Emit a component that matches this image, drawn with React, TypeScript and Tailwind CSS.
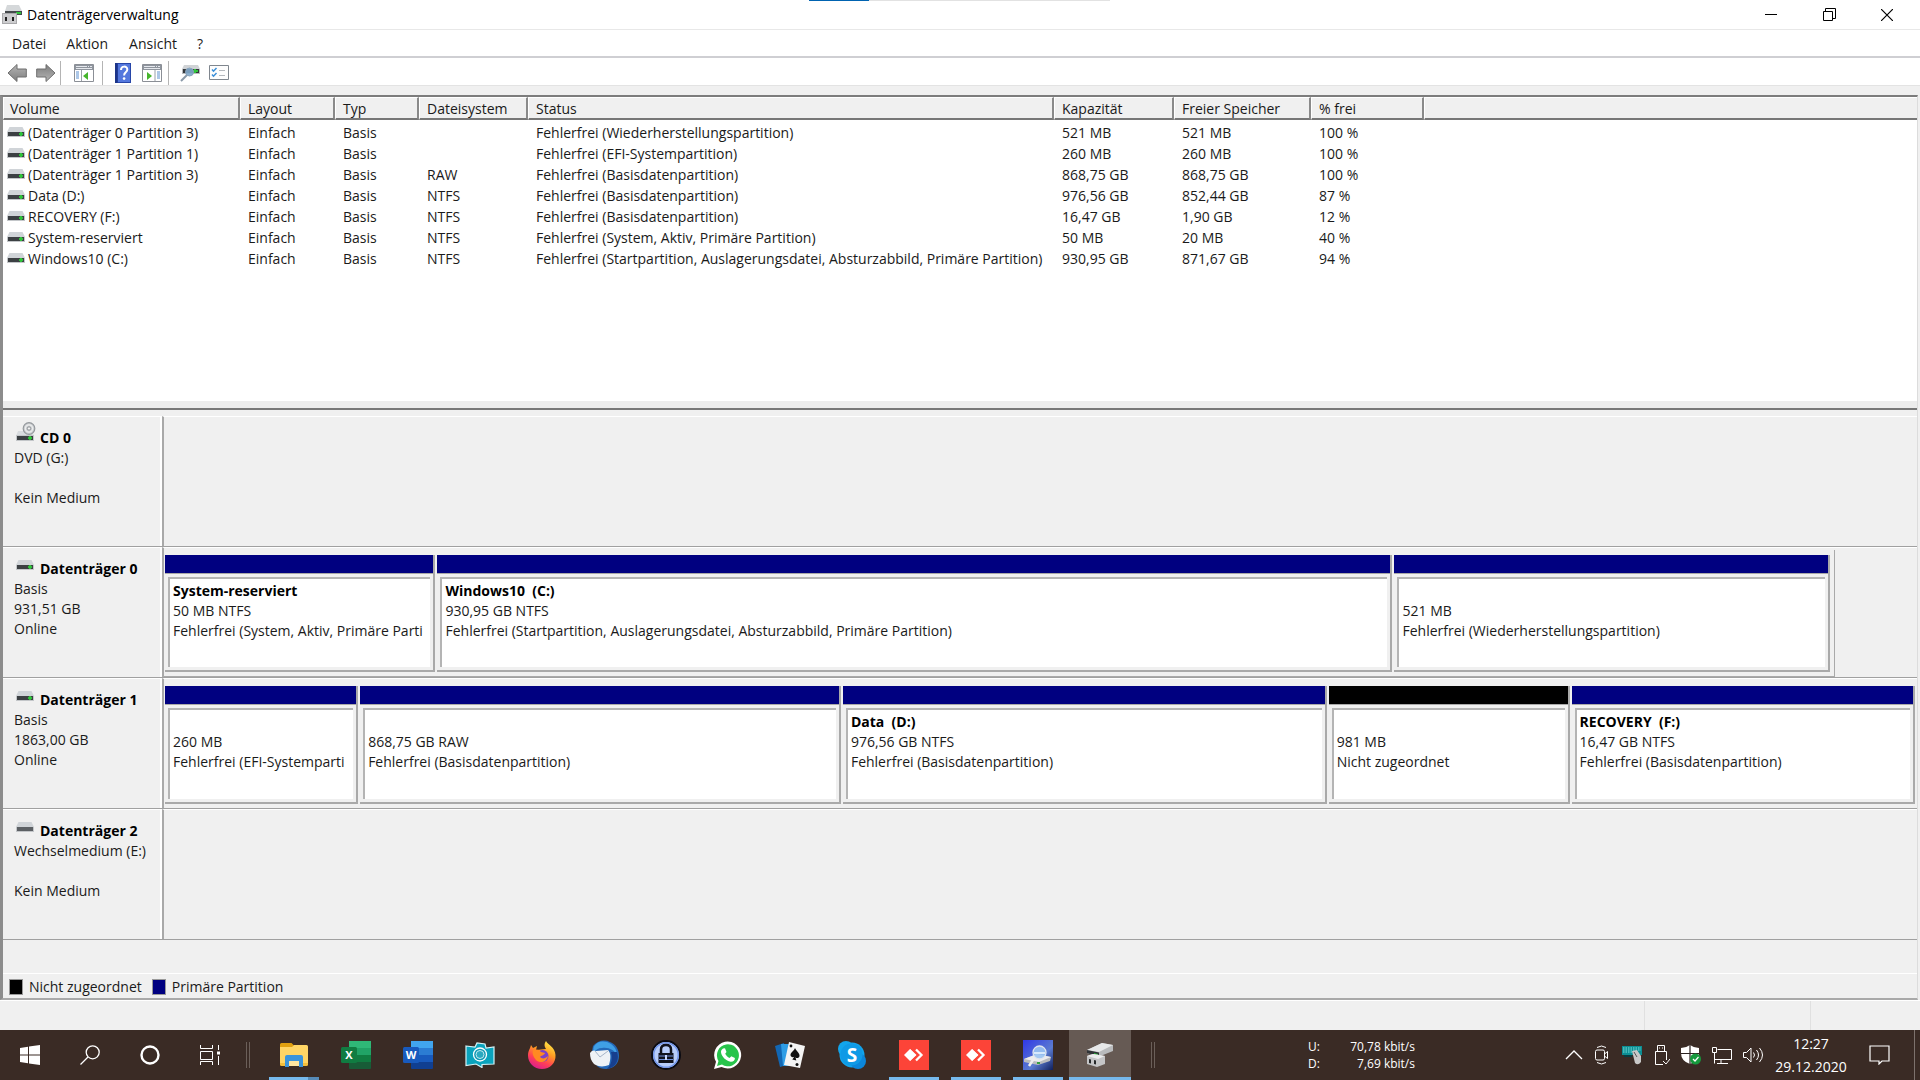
import type { ReactNode } from "react";

interface Volume {
  name: string;
  fs: string;
  status: string;
  capacity: string;
  free: string;
  percent: string;
}

interface Partition {
  name?: string;
  size: string;
  status: string;
  share: number;
  unallocated?: boolean;
}

interface Disk {
  name: string;
  lines: string[];
  kind: "cd" | "online" | "offline";
  fill?: number;
  partitions: Partition[];
}

const volumes: Volume[] = [
  { name: "(Datenträger 0 Partition 3)", fs: "", status: "Fehlerfrei (Wiederherstellungspartition)", capacity: "521 MB", free: "521 MB", percent: "100 %" },
  { name: "(Datenträger 1 Partition 1)", fs: "", status: "Fehlerfrei (EFI-Systempartition)", capacity: "260 MB", free: "260 MB", percent: "100 %" },
  { name: "(Datenträger 1 Partition 3)", fs: "RAW", status: "Fehlerfrei (Basisdatenpartition)", capacity: "868,75 GB", free: "868,75 GB", percent: "100 %" },
  { name: "Data (D:)", fs: "NTFS", status: "Fehlerfrei (Basisdatenpartition)", capacity: "976,56 GB", free: "852,44 GB", percent: "87 %" },
  { name: "RECOVERY (F:)", fs: "NTFS", status: "Fehlerfrei (Basisdatenpartition)", capacity: "16,47 GB", free: "1,90 GB", percent: "12 %" },
  { name: "System-reserviert", fs: "NTFS", status: "Fehlerfrei (System, Aktiv, Primäre Partition)", capacity: "50 MB", free: "20 MB", percent: "40 %" },
  { name: "Windows10 (C:)", fs: "NTFS", status: "Fehlerfrei (Startpartition, Auslagerungsdatei, Absturzabbild, Primäre Partition)", capacity: "930,95 GB", free: "871,67 GB", percent: "94 %" },
];

const disks: Disk[] = [
  { name: "CD 0", lines: ["DVD (G:)", "", "Kein Medium"], kind: "cd", partitions: [] },
  {
    name: "Datenträger 0",
    lines: ["Basis", "931,51 GB", "Online"],
    kind: "online",
    fill: 95.3,
    partitions: [
      { name: "System-reserviert", size: "50 MB NTFS", status: "Fehlerfrei (System, Aktiv, Primäre Parti", share: 269 },
      { name: "Windows10  (C:)", size: "930,95 GB NTFS", status: "Fehlerfrei (Startpartition, Auslagerungsdatei, Absturzabbild, Primäre Partition)", share: 955 },
      { size: "521 MB", status: "Fehlerfrei (Wiederherstellungspartition)", share: 434 },
    ],
  },
  {
    name: "Datenträger 1",
    lines: ["Basis", "1863,00 GB", "Online"],
    kind: "online",
    fill: 100,
    partitions: [
      { size: "260 MB", status: "Fehlerfrei (EFI-Systemparti", share: 192 },
      { size: "868,75 GB RAW", status: "Fehlerfrei (Basisdatenpartition)", share: 481 },
      { name: "Data  (D:)", size: "976,56 GB NTFS", status: "Fehlerfrei (Basisdatenpartition)", share: 484 },
      { size: "981 MB", status: "Nicht zugeordnet", share: 240, unallocated: true },
      { name: "RECOVERY  (F:)", size: "16,47 GB NTFS", status: "Fehlerfrei (Basisdatenpartition)", share: 343 },
    ],
  },
  { name: "Datenträger 2", lines: ["Wechselmedium (E:)", "", "Kein Medium"], kind: "offline", partitions: [] },
];

const columns = ["Volume", "Layout", "Typ", "Dateisystem", "Status", "Kapazität", "Freier Speicher", "% frei", ""];

/* ---------- Drive icons ---------- */

function DriveIcon({ led = true }: { led?: boolean }) {
  return (
    <svg width="18" height="11" viewBox="0 0 18 11" className="shrink-0">
      <path d="M2.5 0h13L18 5H0z" fill="#d0d4d8" />
      <path d="M0 5h18v5H0z" fill="#c3c6c9" />
      <path d="M1 5h16v4H1z" fill={led ? "#3c4043" : "#5c6064"} />
      {led && <path d="M12 6h4v2h-4zM13 5h2v4h-2z" fill="#2fc23a" />}
    </svg>
  );
}

function CdDriveIcon() {
  return (
    <svg width="20" height="20" viewBox="0 0 20 20" className="shrink-0">
      <path d="M2 9h14l2 5H0z" fill="#d9dcdf" />
      <circle cx="13" cy="6.5" r="5.8" fill="#cdd0d3" stroke="#95999d" strokeWidth="1.2" />
      <circle cx="13" cy="6.5" r="3.6" fill="none" stroke="#eceded" strokeWidth="1.2" />
      <circle cx="13" cy="6.5" r="1.7" fill="#f4f4f4" stroke="#8d9195" />
      <path d="M0 13h18v6H0z" fill="#c3c6c9" />
      <path d="M1 14h16v4H1z" fill="#3c4043" />
      <path d="M12 15h4v2h-4zM13 14h2v4h-2z" fill="#2fc23a" />
    </svg>
  );
}

function AppIcon() {
  return (
    <svg width="20" height="20" viewBox="0 0 20 20" className="shrink-0">
      <path d="M5 0h12l3 6H3z" fill="#d5d8da" />
      <path d="M3 6h17v4H3z" fill="#45494c" />
      <path d="M14 7h5v2h-5z" fill="#2fc23a" />
      <path d="M0 8h15v11H0z" fill="#a9a9ab" />
      <path d="M1 9h13v9H1z" fill="#cdcdcf" />
      <path d="M3 12h2v4H3zM10 12h2v4h-2z" fill="#222" />
    </svg>
  );
}

/* ---------- Toolbar icons ---------- */

function ArrowIcon({ forward = false }: { forward?: boolean }) {
  return (
    <svg width="20" height="20" viewBox="0 0 20 20" className={forward ? "rotate-180" : ""}>
      <defs>
        <linearGradient id={forward ? "arrowF" : "arrowB"} x1="0" y1="0" x2="0" y2="1">
          <stop offset="0" stopColor="#b5b5b5" />
          <stop offset="1" stopColor="#7d7d7d" />
        </linearGradient>
      </defs>
      <path d="M1 10L10 1.5V6h9.3v8H10v4.5z" fill={forward ? "url(#arrowF)" : "url(#arrowB)"} stroke="#6e6e6e" />
    </svg>
  );
}

function PaneIcon({ right = false }: { right?: boolean }) {
  const side = right ? 14 : 1;
  return (
    <svg width="20" height="18" viewBox="0 0 20 18">
      <path d="M.5.5h19v17H.5z" fill="#fff" stroke="#8b8f96" />
      <path d="M1 1h18v5H1z" fill="#8f959e" />
      <path d="M2 2h11v1H2zM14 2h1v1h-1zM16 2h2v1h-2zM2 4h16v1H2z" fill="#e6e9ee" />
      <path d={right ? "M13 6v11" : "M7.5 6v11"} stroke="#9aa0a8" />
      <path d={`M${side + 1} 8h3M${side + 1} 10h3M${side + 1} 12h3M${side + 1} 14h3`} stroke="#5b8fd0" />
      <path d={right ? "M5 8l5 4-5 4z" : "M14 8l-5 4 5 4z"} fill="#46b52c" />
    </svg>
  );
}

function HelpIcon() {
  return (
    <svg width="16" height="20" viewBox="0 0 16 20">
      <path d="M0 0h16v20H0z" fill="#2746a8" />
      <path d="M3 1h12v18H3z" fill="#5377dd" />
      <path d="M0 0h2.5v20H0z" fill="#1c3488" />
      <path d="M6 7c0-4.6 6.3-4.2 6.3-.6 0 3-3.2 2.8-3.2 6" fill="none" stroke="#fff" strokeWidth="2" />
      <circle cx="9.1" cy="15.6" r="1.3" fill="#fff" />
    </svg>
  );
}

function InspectIcon() {
  return (
    <svg width="20" height="18" viewBox="0 0 20 18">
      <path d="M4 1h14l2 4H2z" fill="#d0d3d6" />
      <path d="M2 5h18v5H2z" fill="#b9bcbf" />
      <path d="M3 5h16v4H3z" fill="#34383b" />
      <path d="M13 6h5v2h-5zM14 5h2v4h-2z" fill="#32c43c" />
      <path d="M7 11l-6 6" stroke="#8a99a8" strokeWidth="2" />
      <circle cx="9.5" cy="8" r="4" fill="#7fa8cc" fillOpacity=".9" stroke="#8aa3ba" />
    </svg>
  );
}

function ChecklistIcon() {
  return (
    <svg width="20" height="15" viewBox="0 0 20 15">
      <path d="M.5.5h19v14H.5z" fill="#fdfdfd" stroke="#7f868e" />
      <path d="M3 4.5l1.5 1.7L7.5 3M3 9.5l1.5 1.7L7.5 8" fill="none" stroke="#3b8fd8" strokeWidth="1.5" />
      <path d="M10 5.5h6M10 10.5h6" stroke="#b4b8bd" />
    </svg>
  );
}

/* ---------- Taskbar icons ---------- */

function StartIcon() {
  return (
    <svg width="20" height="20" viewBox="0 0 20 20" fill="#fff">
      <path d="M0 3l8-1.2v7.7H0zM9 1.6L20 0v9.5H9zM0 10.5h8v7.7L0 17zM9 10.5h11V20L9 18.4z" />
    </svg>
  );
}

function SearchIcon() {
  return (
    <svg width="20" height="20" viewBox="0 0 20 20" fill="none" stroke="#fff" strokeWidth="1.3">
      <circle cx="12.7" cy="7.3" r="6.5" />
      <path d="M8 12L.5 19.5" />
    </svg>
  );
}

function CortanaIcon() {
  return (
    <svg width="20" height="20" viewBox="0 0 20 20">
      <circle cx="10" cy="10" r="8.5" fill="none" stroke="#fff" strokeWidth="2.4" />
    </svg>
  );
}

function TaskViewIcon() {
  return (
    <svg width="20" height="20" viewBox="0 0 20 20" fill="none" stroke="#fff">
      <path d="M.5 0v3.5h12V0M.5 6.5h12v8H.5zM.5 20v-3.5h12V20M18.5 0v5M18.5 11v9" />
      <path d="M17 6.5h3v3h-3z" fill="#fff" stroke="none" />
    </svg>
  );
}

function ExplorerIcon() {
  return (
    <svg width="28" height="24" viewBox="0 0 28 24">
      <path d="M0 1.5Q0 0 1.5 0h10L14 2.5 12 5H0z" fill="#e0a010" />
      <path d="M0 4h12l2-2h12.5Q28 2 28 3.5V22H0z" fill="#ffd565" />
      <path d="M0 20h28v1.5Q28 23 26.5 23h-25Q0 23 0 21.5z" fill="#f4bf3c" />
      <path d="M5 24V14q0-2 2-2h14q2 0 2 2v10h-4v-6H9v6z" fill="#3a94dc" />
      <path d="M9 18h10v5H9z" fill="#ffe6a0" />
    </svg>
  );
}

function OfficeIcon({ letter, colors }: { letter: string; colors: string[] }) {
  return (
    <svg width="30" height="28" viewBox="0 0 30 28">
      <path d="M8 0h22v7H8z" fill={colors[0]} />
      <path d="M8 7h22v7H8z" fill={colors[1]} />
      <path d="M8 14h22v7H8z" fill={colors[2]} />
      <path d="M8 21h22v6q0 1-1 1H9q-1 0-1-1z" fill={colors[3]} />
      <rect y="6" width="16" height="16" rx="1.5" fill={colors[4]} />
      <text x="8" y="18" textAnchor="middle" fontSize="11" fontWeight="700" fill="#fff">
        {letter}
      </text>
    </svg>
  );
}

function CameraIcon() {
  return (
    <svg width="30" height="26" viewBox="0 0 30 26">
      <path d="M1 4l9 1 2-4 8 1 1 4 8-1v17l-12 .5v3L11 22 1 23.500z" fill="#0aa3bd" stroke="#d5f4f8" strokeWidth="1.2" />
      <circle cx="15" cy="12.5" r="6.5" fill="#1199b4" stroke="#fff" strokeWidth="1.3" />
      <circle cx="15" cy="12.5" r="4" fill="#2aa9c0" stroke="#bfeaf0" />
    </svg>
  );
}

function FirefoxIcon() {
  return (
    <svg width="30" height="30" viewBox="0 0 30 30">
      <defs>
        <linearGradient id="fox" x1=".8" y1="0" x2=".3" y2="1">
          <stop offset="0" stopColor="#fff04a" />
          <stop offset=".4" stopColor="#ff9a22" />
          <stop offset=".7" stopColor="#ff4055" />
          <stop offset="1" stopColor="#d81d90" />
        </linearGradient>
      </defs>
      <path d="M19 1c2 4 9 6 9.500 14C29 23 23 29 15 29S1 23 1 15.500C1 11 3 9 4 5l2 3 4-2-1 4 10-1c-2-3-2-5 0-8z" fill="url(#fox)" />
      <circle cx="15.5" cy="16" r="6" fill="#7c40c9" />
      <path d="M6 10c3-1 6-1 8 2l4 1c-1 3-4 2-5 4 2 2 5 2 8-1-1 6-8 8-12 4-3-3-4-7-3-10z" fill="#ff8a22" />
    </svg>
  );
}

function ThunderbirdIcon() {
  return (
    <svg width="30" height="30" viewBox="0 0 30 30">
      <path d="M4 6C8 1 15-1 21 2c6 2 9 8 9 14 0 8-6 13-13 13-4 0-7-1-9-3L3 11z" fill="#2468b8" />
      <path d="M6 5c3-4 8-4 12-3 6 2 10 7 10 13-3-5-8-8-15-7-4 0-6 2-8 4-1-2-1-5 1-7z" fill="#3f9fe5" />
      <path d="M1 13c2-3 4-3 6-2l12-1c3 3 3 8 1 15-5 2-11 2-15-1-3-3-4-7-4-11z" fill="#eef2f6" />
      <path d="M6 11l5 6 8-6" fill="none" stroke="#a6b5c8" />
      <path d="M28 12c3 8-2 16-10 17 4-4 6-10 4-17z" fill="#173f8e" />
    </svg>
  );
}

function KeePassIcon() {
  return (
    <svg width="30" height="30" viewBox="0 0 30 30">
      <circle cx="15" cy="15" r="14" fill="#b7cdfb" stroke="#0b0b12" strokeWidth="2" />
      <circle cx="15" cy="15" r="12.3" fill="none" stroke="#7396ea" strokeWidth="1.5" />
      <path d="M10 14V9.500q0-4.500 5-4.500t5 4.500V14" fill="none" stroke="#10121c" strokeWidth="2.5" />
      <path d="M7.500 13h15v10h-15z" fill="#10121c" />
      <path d="M8 16h14M8 19.500h14" stroke="#6f8edb" />
      <path d="M14 15h2v5h-2z" fill="#c9d9ff" />
    </svg>
  );
}

function WhatsAppIcon() {
  return (
    <svg width="28" height="28" viewBox="0 0 28 28">
      <path d="M0 28l2-7.200A13.500 13.500 0 1 1 7.500 26z" fill="#fff" />
      <path d="M3 25l1.500-5A11 11 0 1 1 8 23.600z" fill="#27c44b" />
      <path d="M9 7.500l2-.2 1.500 3.600-1.300 1.800c1 2 2.400 3.300 4.400 4.200l1.700-1.600 3.600 1.700c.2 2.500-2 4-4.300 3.700-4.500-.6-9-5-9.600-9.400C6.800 9.600 8 8.200 9 7.500z" fill="#fff" />
    </svg>
  );
}

function CardsIcon() {
  return (
    <svg width="30" height="26" viewBox="0 0 30 26">
      <path d="M0 4l9-3 3 22-7 2z" fill="#1267b4" />
      <path d="M6 2h11v22H8z" fill="#2e9de6" />
      <path d="M14 0l16 4-5 22-16-3z" fill="#f4f4f4" />
      <path d="M20 6c1 3 5 5 4.500 8-.5 2.500-3 2.500-4 1.200l.8 3.300-4-1 2-2.800c-1.300 1-4 .3-3.800-2C15.800 10 19 9 20 6z" fill="#111" />
      <circle cx="16" cy="4" r="1.4" fill="#111" />
      <circle cx="22" cy="22.5" r="1.5" fill="#111" />
    </svg>
  );
}

function SkypeIcon() {
  return (
    <svg width="28" height="28" viewBox="0 0 28 28">
      <circle cx="14" cy="14" r="12.5" fill="#12a5ec" />
      <circle cx="8" cy="8" r="8" fill="#12a5ec" />
      <circle cx="20" cy="20" r="8" fill="#0b86da" />
      <circle cx="13.5" cy="13.5" r="11" fill="#0f9ae6" />
      <text x="14" y="21" textAnchor="middle" fontSize="19" fontWeight="700" fill="#fff">
        S
      </text>
    </svg>
  );
}

function AnyDeskIcon() {
  return (
    <svg width="30" height="30" viewBox="0 0 30 30">
      <path d="M0 0h30v30H0z" fill="#fc4438" />
      <path d="M5 15l6-6 6 6-6 6z" fill="#fff" />
      <path d="M17 9.500l5.500 5.500-5.500 5.500" fill="none" stroke="#fff" strokeWidth="2.3" />
      <path d="M11 9l6.500 6L11 21" fill="#fff" />
    </svg>
  );
}

function DefragIcon() {
  return (
    <svg width="30" height="30" viewBox="0 0 30 30">
      <defs>
        <linearGradient id="defrag" x1="0" y1="0" x2="1" y2="1">
          <stop offset="0" stopColor="#3038e8" />
          <stop offset=".6" stopColor="#5a7ad0" />
          <stop offset="1" stopColor="#10205c" />
        </linearGradient>
      </defs>
      <path d="M0 0h30v30H0z" fill="url(#defrag)" />
      <path d="M1 19l13-5 14 3-1 4-12 4-14-3z" fill="#b9bbbe" />
      <path d="M1 19l13-5 14 3-12 5z" fill="#ececee" />
      <path d="M14 22h3v2h-3z" fill="#35a043" />
      <path d="M12 17l-6 9" stroke="#eee" strokeWidth="2.5" />
      <circle cx="16.5" cy="12.5" r="6.5" fill="#9cc5f2" fillOpacity=".9" stroke="#dfe6ee" strokeWidth="1.3" />
      <path d="M11 13h11" stroke="#d8eafc" strokeWidth="2" />
    </svg>
  );
}

function DiskManagerIcon() {
  return (
    <svg width="28" height="26" viewBox="0 0 28 26">
      <path d="M1 8l15-7 11 2v6l-15 6-11-4z" fill="#b9bbbd" />
      <path d="M1 8l15-7 11 2-14 7z" fill="#e7e8e9" />
      <path d="M1 8l12 2.500V15L1 11z" fill="#303336" />
      <path d="M8 11l4 1v2l-4-1z" fill="#27b03a" />
      <path d="M1 14l6-2 12 2v8l-8 3-10-3z" fill="#c4c5c7" />
      <path d="M1 14l6-2 12 2-7 3z" fill="#ececed" />
      <path d="M3 17l2 .5v4L3 21zM8 18l2 .5v4L8 22z" fill="#26292b" />
    </svg>
  );
}

/* ---------- Tray icons ---------- */

function ChevronIcon() {
  return (
    <svg width="18" height="10" viewBox="0 0 18 10" fill="none" stroke="#fff" strokeWidth="1.3">
      <path d="M1 9l8-8 8 8" />
    </svg>
  );
}

function MeetNowIcon() {
  return (
    <svg width="16" height="20" viewBox="0 0 16 20" fill="none" stroke="#fff">
      <rect x="1.5" y="5" width="9" height="10" rx="1.5" />
      <path d="M10.500 9l3-2.500v7l-3-2.500M3 2.500q4.500-3 9 0M3 17.500q4.500 3 9 0" />
    </svg>
  );
}

function KeyboardIcon() {
  return (
    <svg width="22" height="20" viewBox="-1 0 22 20">
      <path d="M0 1h20v9H0z" fill="#0c8e93" />
      <path d="M1 3h18M1 5h18M1 7h12" stroke="#7ce0df" strokeDasharray="1.5 1" />
      <path d="M2 10h8v2H2z" fill="#063c40" />
      <path d="M10 6l5-1 4 6v6q-3 4-6 1z" fill="#c8c8c8" />
      <path d="M12 7l3 5" stroke="#555" />
    </svg>
  );
}

function UsbIcon() {
  return (
    <svg width="16" height="20" viewBox="0 0 16 20" fill="none" stroke="#fff">
      <path d="M3.500 6.500v-6h7v6M1.500 6.500h11V15M9 19.500H1.500v-13" />
      <path d="M5 3h1M8 3h1" />
      <path d="M9 16l3 3 4-5" />
    </svg>
  );
}

function DefenderIcon() {
  return (
    <svg width="20" height="20" viewBox="0 0 20 20">
      <path d="M9 0q4 3 9 3v5q0 8-9 11Q0 16 0 8V3q5 0 9-3z" fill="#fff" />
      <path d="M9 0v19M0 8.500h18" stroke="#2b2220" strokeWidth="1.2" />
      <circle cx="14.5" cy="14" r="5.5" fill="#15993d" />
      <path d="M12 14l2 2 3.500-4" fill="none" stroke="#fff" strokeWidth="1.2" />
    </svg>
  );
}

function NetworkIcon() {
  return (
    <svg width="20" height="17" viewBox="0 0 20 17" fill="none" stroke="#fff">
      <path d="M5.500 2.500h14v10H3M9 12.500v4M5 16.500h11M.5.500h4v5h-4zM2.500 5.500v11" />
    </svg>
  );
}

function VolumeIcon() {
  return (
    <svg width="21" height="18" viewBox="0 0 21 18" fill="none" stroke="#fff">
      <path d="M.5 6.500h3L8 2v14l-4.500-4.500h-3zM10.500 6.500q2 2.500 0 5M13.500 4q4 5 0 10M16.500 2q6 7 0 14" />
    </svg>
  );
}

function NotificationIcon() {
  return (
    <svg width="21" height="20" viewBox="0 0 21 20" fill="none" stroke="#fff" strokeWidth="1.2">
      <path d="M1 1h19v15h-7l-3 3v-3H1z" />
    </svg>
  );
}

/* ---------- Window parts ---------- */

function TitleBar() {
  return (
    <header className="relative flex h-[30px] shrink-0 items-center border-b border-[#e8e8e8] bg-white pl-0.5">
      <div className="absolute top-0 left-[809px] flex h-px w-[301px] bg-[#e2e2e2]">
        <span className="w-[60px] bg-[#0063b1]" />
      </div>
      <AppIcon />
      <h1 className="ml-[5px] flex-1 text-black">Datenträgerverwaltung</h1>
      <div className="mr-1 flex h-full">
        <button aria-label="Minimieren" className="flex w-[58px] items-center justify-center">
          <svg width="12" height="12" viewBox="0 0 12 12" stroke="#000">
            <path d="M0 5.500h12" />
          </svg>
        </button>
        <button aria-label="Wiederherstellen" className="flex w-[58px] items-center justify-center">
          <svg width="13" height="13" viewBox="0 0 13 13" fill="none" stroke="#000">
            <path d="M.5 3.500h9v9h-9zM2.500 3.500v-3h10v10h-3" />
          </svg>
        </button>
        <button aria-label="Schließen" className="flex w-[58px] items-center justify-center">
          <svg width="12" height="12" viewBox="0 0 12 12" stroke="#000" strokeWidth="1.2">
            <path d="M0 0l12 12M12 0L0 12" />
          </svg>
        </button>
      </div>
    </header>
  );
}

function ToolButton({ label, children }: { label: string; children: ReactNode }) {
  return (
    <button aria-label={label} className="flex h-6 w-[29px] items-center justify-center">
      {children}
    </button>
  );
}

function ToolSeparator() {
  return <span className="h-6 w-px bg-[#b4b4b4]" />;
}

function VolumeTable() {
  return (
    <div className="h-[304px] shrink-0 overflow-hidden bg-white">
      <table className="w-full table-fixed border-separate border-spacing-0 text-left">
        <colgroup>
          <col className="w-[237px]" />
          <col className="w-[95px]" />
          <col className="w-[84px]" />
          <col className="w-[109px]" />
          <col className="w-[526px]" />
          <col className="w-[120px]" />
          <col className="w-[137px]" />
          <col className="w-[113px]" />
          <col />
        </colgroup>
        <thead>
          <tr className="h-[22px]">
            {columns.map((column, i) => (
              <th
                key={i}
                className="border-t border-r-2 border-b-2 border-l border-t-white border-r-[#8a8a8a] border-b-[#777] border-l-white bg-[#f0f0f0] px-[7px] pt-0.5 leading-[18px] font-normal whitespace-nowrap first:pl-[6px] last:border-r-0"
              >
                {column}
              </th>
            ))}
          </tr>
          <tr className="h-0.5" />
        </thead>
        <tbody>
          {volumes.map((volume) => (
            <tr key={volume.name} className="h-[21px] leading-[21px] whitespace-nowrap [&>td]:py-0 [&>td]:pl-2">
              <td>
                <span className="-ml-1 flex items-center gap-[3px]">
                  <DriveIcon />
                  {volume.name}
                </span>
              </td>
              <td>Einfach</td>
              <td>Basis</td>
              <td>{volume.fs}</td>
              <td>{volume.status}</td>
              <td>{volume.capacity}</td>
              <td>{volume.free}</td>
              <td>{volume.percent}</td>
              <td />
            </tr>
          ))}
        </tbody>
      </table>
    </div>
  );
}

function PartitionBox({ partition }: { partition: Partition }) {
  return (
    <div
      className="flex min-w-0 basis-0 flex-col border-r-2 border-b-2 border-[#a9a9a9]"
      style={{ flexGrow: partition.share }}
    >
      <div className={`h-[18px] ${partition.unallocated ? "bg-black" : "bg-[#000080]"}`} />
      <div className="flex flex-1 flex-col border-t border-[#a9a9a9] p-[3px]">
        <div className="flex-1 overflow-hidden border-t-2 border-l-2 border-[#b4b4b4] bg-white px-[3px] pt-0.5 leading-5 whitespace-pre">
          <p className="h-5 font-bold text-black">{partition.name}</p>
          <p>{partition.size}</p>
          <p>{partition.status}</p>
        </div>
      </div>
    </div>
  );
}

function DiskRow({ disk }: { disk: Disk }) {
  return (
    <section className="flex h-[131px] border-b border-[#a0a0a0]">
      <div className="w-[159px] shrink-0 border-t border-r-2 border-white pt-[11px] pl-[11px] leading-5 whitespace-nowrap">
        <div className="flex h-5 items-center">
          <span className="ml-0.5 flex h-full w-6 items-center">
            {disk.kind === "cd" ? (
              <span className="-mt-3">
                <CdDriveIcon />
              </span>
            ) : (
              <span className="-mt-2">
                <DriveIcon led={disk.kind === "online"} />
              </span>
            )}
          </span>
          <h2 className="font-bold text-black">{disk.name}</h2>
        </div>
        {disk.lines.map((line, i) => (
          <p key={i} className="h-5">
            {line}
          </p>
        ))}
      </div>
      <div className="flex min-w-0 flex-1 border-t border-l-2 border-t-white border-l-[#a9a9a9] pt-0.5">
        {disk.partitions.length > 0 && (
          <div
            className={`flex gap-0.5 pt-[5px] pb-1 pl-px ${disk.fill === 100 ? "pr-0.5" : "border-r border-b border-[#a9a9a9] pr-1"}`}
            style={{ width: `${disk.fill}%` }}
          >
            {disk.partitions.map((partition) => (
              <PartitionBox key={partition.size} partition={partition} />
            ))}
          </div>
        )}
      </div>
    </section>
  );
}

function Legend() {
  return (
    <div className="flex h-[25px] shrink-0 items-center border-t border-white pt-0.5 pl-[6px]">
      <span className="h-4 w-[14px] border border-[#999] bg-black" />
      <span className="ml-[6px]">Nicht zugeordnet</span>
      <span className="ml-[10px] h-4 w-[14px] border border-[#999] bg-[#000080]" />
      <span className="ml-[6px]">Primäre Partition</span>
    </div>
  );
}

interface TaskItem {
  label: string;
  icon: ReactNode;
  running?: boolean;
  active?: boolean;
  stacked?: boolean;
}

const systemItems: TaskItem[] = [
  { label: "Start", icon: <StartIcon /> },
  { label: "Suche", icon: <SearchIcon /> },
  { label: "Cortana", icon: <CortanaIcon /> },
  { label: "Taskansicht", icon: <TaskViewIcon /> },
];

const taskItems: TaskItem[] = [
  { label: "Explorer", icon: <ExplorerIcon />, running: true, stacked: true },
  { label: "Excel", icon: <OfficeIcon letter="X" colors={["#2fb877", "#21a366", "#107c41", "#185c37", "#107c41"]} /> },
  { label: "Word", icon: <OfficeIcon letter="W" colors={["#41a5ee", "#2b7cd3", "#185abd", "#103f91", "#185abd"]} /> },
  { label: "Kamera", icon: <CameraIcon /> },
  { label: "Firefox", icon: <FirefoxIcon /> },
  { label: "Thunderbird", icon: <ThunderbirdIcon /> },
  { label: "KeePass", icon: <KeePassIcon /> },
  { label: "WhatsApp", icon: <WhatsAppIcon /> },
  { label: "Solitaire", icon: <CardsIcon /> },
  { label: "Skype", icon: <SkypeIcon /> },
  { label: "AnyDesk", icon: <AnyDeskIcon />, running: true },
  { label: "AnyDesk Sitzung", icon: <AnyDeskIcon />, running: true },
  { label: "Laufwerke optimieren", icon: <DefragIcon />, running: true },
  { label: "Datenträgerverwaltung", icon: <DiskManagerIcon />, active: true },
];

function Grip() {
  return <span className="block h-[26px] w-1 shrink-0 border-x border-[#6b5f59]" />;
}

function Taskbar() {
  return (
    <footer className="flex h-[50px] shrink-0 items-center bg-[#3a2b25] text-white">
      {systemItems.map((item) => (
        <button key={item.label} aria-label={item.label} className="flex h-full w-[60px] items-center justify-center">
          {item.icon}
        </button>
      ))}
      <span className="w-[23px] pl-[6px]">
        <Grip />
      </span>
      {taskItems.map((item) => (
        <button
          key={item.label}
          aria-label={item.label}
          className={`relative flex h-full w-[62px] items-center justify-center ${item.active ? "bg-[#665a54]" : ""}`}
        >
          {item.icon}
          {item.active && <span className="absolute inset-x-0 bottom-0 h-[3px] bg-[#76b9ed]" />}
          {item.running && (
            <span className="absolute inset-x-[6px] bottom-0 flex h-[3px] justify-end bg-[#76b9ed]">
              {item.stacked && <span className="w-[11px] bg-[#568bb8]" />}
            </span>
          )}
        </button>
      ))}
      <span className="ml-5">
        <Grip />
      </span>
      <dl className="ml-auto grid w-[107px] grid-cols-[auto_1fr] text-xs leading-[17px] font-medium">
        <dt>U:</dt>
        <dd className="text-right">70,78 kbit/s</dd>
        <dt>D:</dt>
        <dd className="text-right">7,69 kbit/s</dd>
      </dl>
      <div className="ml-[150px] flex items-center gap-[11px]">
        <ChevronIcon />
        <MeetNowIcon />
        <KeyboardIcon />
        <UsbIcon />
        <DefenderIcon />
        <NetworkIcon />
        <VolumeIcon />
      </div>
      <div className="ml-[7px] w-20 text-center leading-[23px]">
        <p>12:27</p>
        <p>29.12.2020</p>
      </div>
      <button aria-label="Benachrichtigungen" className="ml-[18px]">
        <NotificationIcon />
      </button>
      <span className="ml-6 h-full w-[6px] border-l border-[#7d726d]" />
    </footer>
  );
}

export default function App() {
  return (
    <div className="flex min-h-screen flex-col overflow-hidden bg-[#f0f0f0] font-['Open_Sans','Noto_Sans',sans-serif] text-[14px] leading-5 text-[#1a1a1a]">
      <TitleBar />
      <nav className="flex h-7 shrink-0 items-center border-b-2 border-[#cfcfd3] bg-white pt-0.5 pl-3">
        <button className="mr-5">Datei</button>
        <button className="mr-[21px]">Aktion</button>
        <button className="mr-5">Ansicht</button>
        <button>?</button>
      </nav>
      <div className="flex h-7 shrink-0 items-center border-b border-[#e3e3e3] bg-white pt-0.5 pl-0.5" role="toolbar">
        <ToolButton label="Zurück"><ArrowIcon /></ToolButton>
        <ToolButton label="Vorwärts"><ArrowIcon forward /></ToolButton>
        <ToolSeparator />
        <span className="mr-1 ml-2 flex">
          <ToolButton label="Konsolenstruktur"><PaneIcon /></ToolButton>
        </span>
        <ToolSeparator />
        <span className="mr-[2px] ml-[5px] flex">
          <ToolButton label="Hilfe"><HelpIcon /></ToolButton>
          <ToolButton label="Aktionsbereich"><PaneIcon right /></ToolButton>
        </span>
        <ToolSeparator />
        <span className="ml-[6px] flex">
          <ToolButton label="Aktualisieren"><InspectIcon /></ToolButton>
          <ToolButton label="Einstellungen"><ChecklistIcon /></ToolButton>
        </span>
      </div>
      <main className="mt-[9px] mr-0.5 flex flex-1 flex-col border-t-2 border-r border-b-2 border-l-[3px] border-t-[#7c7c7c] border-r-[#dcdcdc] border-b-[#a9a9a9] border-l-[#8c8c8c]">
        <VolumeTable />
        <div className="h-[9px] shrink-0 border-b-2 border-[#777] bg-[#ececec]" />
        <div className="flex-1 pt-[6px]">
          {disks.map((disk) => (
            <DiskRow key={disk.name} disk={disk} />
          ))}
        </div>
        <Legend />
      </main>
      <div className="flex h-[30px] shrink-0 border-t border-white">
        <span className="flex-1" />
        <span className="w-[166px] border-l border-[#e0e0e0]" />
        <span className="w-[110px] border-l border-[#e0e0e0]" />
      </div>
      <Taskbar />
    </div>
  );
}
